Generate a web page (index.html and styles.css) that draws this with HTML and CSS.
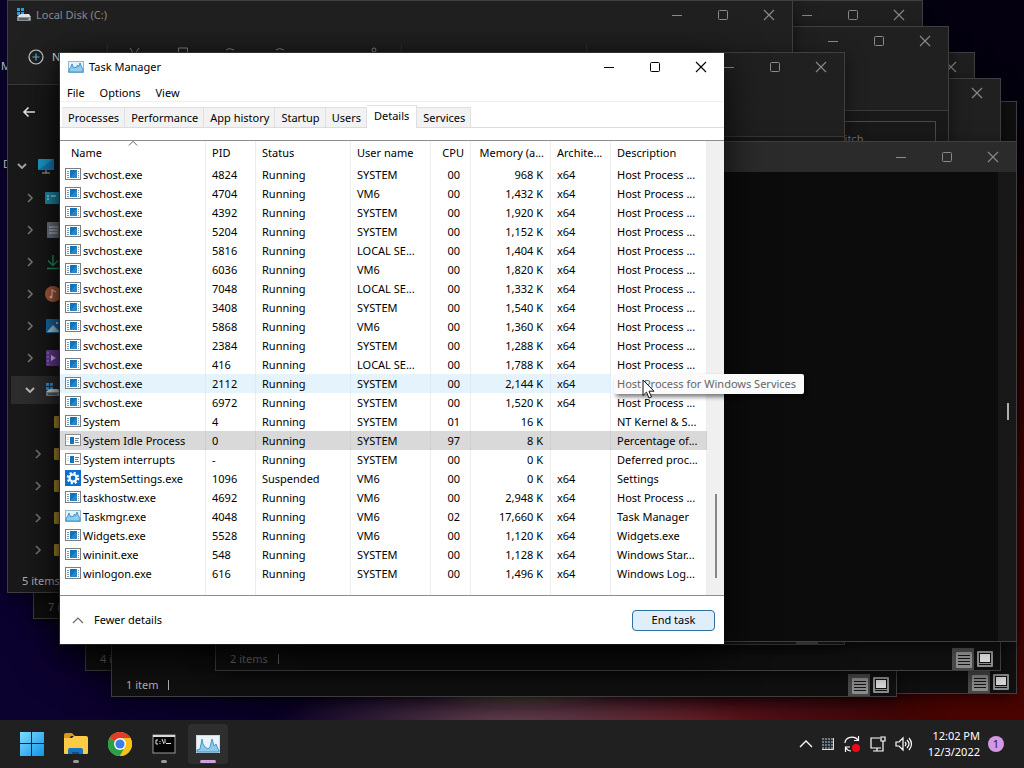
FILE: index.html
```html
<!DOCTYPE html>
<html lang="en">
<head>
  <meta charset="UTF-8" />
  <title>Task Manager</title>
  <link rel="stylesheet" href="styles.css">
</head>
<body>

  <!-- shared icons -->
  <svg class="sprite" aria-hidden="true">
    <symbol id="min" viewBox="0 0 12 12"><path d="M1 6.500h10" fill="none" stroke="currentColor"/></symbol>
    <symbol id="max" viewBox="0 0 12 12"><rect x="1.500" y="1.500" width="9" height="9" rx="1" fill="none" stroke="currentColor"/></symbol>
    <symbol id="close" viewBox="0 0 12 12"><path d="M1 1l10 10M11 1L1 11" fill="none" stroke="currentColor" stroke-width="1.100"/></symbol>
    <symbol id="chev" viewBox="0 0 12 12"><path d="M4 2l4 4-4 4" fill="none" stroke="currentColor" stroke-width="1.600"/></symbol>
    <symbol id="chev-down" viewBox="0 0 12 12"><path d="M2 4l4 4 4-4" fill="none" stroke="currentColor" stroke-width="1.800"/></symbol>
    <symbol id="chev-up" viewBox="0 0 12 12"><path d="M1 9l5-5 5 5" fill="none" stroke="currentColor" stroke-width="1.100"/></symbol>
    <symbol id="exe" viewBox="0 0 16 16">
      <rect x=".5" y="2.500" width="15" height="11" fill="#fff" stroke="#7b7f83"/>
      <rect x="5" y="4" width="7" height="8" fill="#1273b8"/><path d="M5 12l7-8v8z" fill="#2a86c8"/>
      <path d="M2 5.500h2M2 7.500h2M2 9.500h2M2 11.500h2M13 5.500h1M13 7.500h1M13 9.500h1M13 11.500h1" stroke="#7d95a8"/>
    </symbol>
    <symbol id="idle" viewBox="0 0 16 16">
      <rect x=".5" y="2.500" width="15" height="11" fill="#fff" stroke="#8b8f93"/>
      <rect x="5" y="5" width="4" height="7" fill="#1273b8"/>
      <path d="M10 6.500h4M10 8.500h3M10 10.500h4" stroke="#68809a"/>
      <path d="M2 5.500h2M2 7.500h2M2 9.500h2" stroke="#c7d2dc"/>
    </symbol>
    <symbol id="gear" viewBox="0 0 16 16">
      <rect width="16" height="16" fill="#0a6fce"/>
      <circle cx="8" cy="8" r="5.200" fill="none" stroke="#fff" stroke-width="2.200" stroke-dasharray="2.100 1.980"/>
      <circle cx="8" cy="8" r="3.500" fill="none" stroke="#fff" stroke-width="2.200"/>
    </symbol>
    <symbol id="graph" viewBox="0 0 16 16">
      <rect x=".5" y="2.500" width="15" height="11" fill="#e3f1f8" stroke="#9ab8c8"/>
      <path d="M1 10l1.500-1L4 5l1.500 4L7 8l1 1 1.500-3 1 2L12 4l1.500 4L15 10v3H1z" fill="#8fcdee" stroke="#2b86c4" stroke-width=".8"/>
    </symbol>
    <symbol id="disk" viewBox="0 0 16 14">
      <path d="M1 0h3v3H1zM5 0h3v3H5zM1 4h3v3H1zM5 4h3v3H5z" fill="#2f9be0"/>
      <path d="M5 6h8l2 3H1l2-2z" fill="#dfe3e6"/><rect x="1" y="9" width="14" height="4" rx="1" fill="#8b9095"/>
      <path d="M3 11h9" stroke="#2c3236"/><path d="M13 11h1" stroke="#7bf0a0"/>
    </symbol>
    <symbol id="folder" viewBox="0 0 16 14"><path d="M0 2q0-1 1-1h4l2 2h8q1 0 1 1v8q0 1-1 1H1q-1 0-1-1z" fill="#b99a3a"/></symbol>
    <symbol id="view-details" viewBox="0 0 22 22">
      <rect width="22" height="22" fill="#4a4a4a"/><rect x="4" y="4" width="16" height="16" rx="1" fill="#8d8d8d"/>
      <path d="M6 7.500h12M6 10.500h12M6 13.500h12M6 16.500h12" stroke="#151515"/>
    </symbol>
    <symbol id="view-icons" viewBox="0 0 16 16">
      <rect width="16" height="16" rx="1" fill="#8d8d8d"/><rect x="2.500" y="2.500" width="11" height="9" fill="#dcdcdc" stroke="#111"/>
      <path d="M2 13.500h12" stroke="#111"/>
    </symbol>
  </svg>

  <main class="desktop">
    <span class="shortcut shortcut-1">M</span>
    <span class="shortcut shortcut-2">D</span>

    <section class="window explorer w-far">
      <footer class="status"><span class="views"><svg width="22" height="22"><use href="#view-details"/></svg><svg width="16" height="16"><use href="#view-icons"/></svg></span></footer>
    </section>

    <section class="window explorer w-four">
      <footer class="status"><span>4 i</span></footer>
    </section>

    <section class="window explorer w-seven">
      <footer class="status"><span>7 i</span></footer>
    </section>

    <section class="window explorer w-one">
      <footer class="status lit"><span>1 item</span><i class="bar"></i><span class="views"><svg width="22" height="22"><use href="#view-details"/></svg><svg width="16" height="16"><use href="#view-icons"/></svg></span></footer>
    </section>

    <section class="window explorer w-c">
      <header class="titlebar"><span class="controls"><button aria-label="Close"><svg width="12" height="12"><use href="#close"/></svg></button></span></header>
    </section>

    <section class="window explorer w-a">
      <header class="titlebar"><span class="controls"><button aria-label="Minimize"><svg width="12" height="12"><use href="#min"/></svg></button><button aria-label="Maximize"><svg width="12" height="12"><use href="#max"/></svg></button><button aria-label="Close"><svg width="12" height="12"><use href="#close"/></svg></button></span></header>
    </section>

    <section class="window explorer w-two">
      <header class="titlebar"><span class="controls"><button aria-label="Close"><svg width="12" height="12"><use href="#close"/></svg></button></span></header>
      <div class="commands plain"></div>
      <footer class="status"><span>2 items</span><i class="bar"></i><span class="views"><svg width="22" height="22"><use href="#view-details"/></svg><svg width="16" height="16"><use href="#view-icons"/></svg></span></footer>
    </section>

    <section class="window explorer w-b">
      <header class="titlebar"><span class="controls"><button aria-label="Minimize"><svg width="12" height="12"><use href="#min"/></svg></button><button aria-label="Maximize"><svg width="12" height="12"><use href="#max"/></svg></button><button aria-label="Close"><svg width="12" height="12"><use href="#close"/></svg></button></span></header>
      <div class="commands"></div>
      <div class="address"><input class="search" type="search" placeholder="Twitch" aria-label="Search Twitch"></div>
    </section>

    <section class="window explorer w-disk">
      <header class="titlebar">
        <svg width="16" height="14"><use href="#disk"/></svg>
        <h2>Local Disk (C:)</h2>
        <span class="controls"><button aria-label="Minimize"><svg width="12" height="12"><use href="#min"/></svg></button><button aria-label="Maximize"><svg width="12" height="12"><use href="#max"/></svg></button><button aria-label="Close"><svg width="12" height="12"><use href="#close"/></svg></button></span>
      </header>
      <div class="commands">
        <button class="new">
          <svg width="16" height="16" viewBox="0 0 16 16"><circle cx="8" cy="8" r="7" fill="none" stroke="#c8d0d6" stroke-width="1.200"/><path d="M8 4.500v7M4.500 8h7" stroke="#58a9dc" stroke-width="1.200"/></svg>
          New
        </button>
        <svg class="tools" width="480" height="20" viewBox="0 0 480 20" fill="none" stroke="#8d8d8d">
          <path d="M.5 0v20M294.500 0v20M479.500 0v20" stroke="#343434"/>
          <path d="M23 3l8 12M32 3l-8 12M71.500 14v-11h9v11M119 5q3-3 8 0M169 5q3-3 8 0"/><circle cx="267" cy="5" r="2"/>
        </svg>
      </div>
      <div class="address">
        <button class="back" aria-label="Back"><svg width="14" height="12" viewBox="0 0 14 12"><path d="M13 6H2M6.500 1.500L2 6l4.500 4.500" fill="none" stroke="#e8e8e8" stroke-width="1.600"/></svg></button>
      </div>
      <ul class="tree">
        <li><svg width="12" height="12"><use href="#chev-down"/></svg><svg width="16" height="16" viewBox="0 0 16 16"><rect y="1" width="16" height="11" rx="1" fill="#1c9fd0"/><path d="M0 12L16 1v10q0 1-1 1z" fill="#1581bd"/><path d="M8 12v3M4 15h8" stroke="#b8c4ca"/></svg></li>
        <li class="sub"><svg width="12" height="12"><use href="#chev"/></svg><svg width="16" height="16" viewBox="0 0 16 16"><rect y="2" width="16" height="12" rx="1" fill="#1f94b5"/><path d="M2 6h2M2 9h2M6 6h5" stroke="#a8f0ff" stroke-width="1.500"/></svg></li>
        <li class="sub"><svg width="12" height="12"><use href="#chev"/></svg><svg width="16" height="16" viewBox="0 0 16 16"><rect x="2" width="13" height="16" rx="1" fill="#707b88"/><path d="M4 5h9M4 8h9M4 11h9" stroke="#dbe1e8"/></svg></li>
        <li class="sub"><svg width="12" height="12"><use href="#chev"/></svg><svg width="16" height="16" viewBox="0 0 16 16"><path d="M8 1v10M3 6.500l5 5 5-5M2 14.500h12" fill="none" stroke="#1f9a68" stroke-width="1.500"/></svg></li>
        <li class="sub"><svg width="12" height="12"><use href="#chev"/></svg><svg width="16" height="16" viewBox="0 0 16 16"><circle cx="8" cy="8" r="8" fill="#b5603f"/><path d="M7 11V4l4 2" fill="none" stroke="#f3d3c8" stroke-width="1.200"/><circle cx="6" cy="11" r="1.500" fill="#f3d3c8"/></svg></li>
        <li class="sub"><svg width="12" height="12"><use href="#chev"/></svg><svg width="16" height="16" viewBox="0 0 16 16"><rect x="1" y="1" width="15" height="14" rx="1" fill="#1b6fae"/><path d="M2 14l6-7 7 7z" fill="#b7dcf2"/><circle cx="12" cy="5" r="1" fill="#fff"/></svg></li>
        <li class="sub"><svg width="12" height="12"><use href="#chev"/></svg><svg width="16" height="16" viewBox="0 0 16 16"><rect x="1" width="15" height="16" rx="1" fill="#6d3fa3"/><path d="M6 5l5 3-5 3z" fill="#e2d3f5"/><path d="M3 2v13" stroke="#b596dd" stroke-dasharray="2 2"/></svg></li>
        <li class="sub current"><svg width="12" height="12"><use href="#chev-down"/></svg><svg width="16" height="14"><use href="#disk"/></svg></li>
        <li class="leaf"><svg width="12" height="12"></svg><svg width="16" height="14"><use href="#folder"/></svg></li>
        <li class="leaf"><svg width="12" height="12"><use href="#chev"/></svg><svg width="16" height="14"><use href="#folder"/></svg></li>
        <li class="leaf"><svg width="12" height="12"><use href="#chev"/></svg><svg width="16" height="14"><use href="#folder"/></svg></li>
        <li class="leaf"><svg width="12" height="12"><use href="#chev"/></svg><svg width="16" height="14"><use href="#folder"/></svg></li>
        <li class="leaf"><svg width="12" height="12"><use href="#chev"/></svg><svg width="16" height="14"><use href="#folder"/></svg></li>
      </ul>
      <footer class="status lit"><span>5 items</span></footer>
    </section>

    <section class="window explorer w-mid">
      <header class="titlebar"><span class="controls"><button aria-label="Minimize"><svg width="12" height="12"><use href="#min"/></svg></button><button aria-label="Maximize"><svg width="12" height="12"><use href="#max"/></svg></button><button aria-label="Close"><svg width="12" height="12"><use href="#close"/></svg></button></span></header>
      <div class="commands"></div>
      <footer class="status"><span class="views"><svg width="22" height="22"><use href="#view-details"/></svg><svg width="16" height="16"><use href="#view-icons"/></svg></span></footer>
    </section>

    <section class="window terminal">
      <header class="titlebar"><span class="controls"><button aria-label="Minimize"><svg width="12" height="12"><use href="#min"/></svg></button><button aria-label="Maximize"><svg width="12" height="12"><use href="#max"/></svg></button><button aria-label="Close"><svg width="12" height="12"><use href="#close"/></svg></button></span></header>
      <div class="console"><div class="console-scroll"><i></i></div></div>
    </section>

    <section class="window taskmgr">
      <header class="titlebar">
        <svg width="16" height="16"><use href="#graph"/></svg>
        <h1>Task Manager</h1>
        <span class="controls"><button aria-label="Minimize"><svg width="12" height="12"><use href="#min"/></svg></button><button aria-label="Maximize"><svg width="12" height="12"><use href="#max"/></svg></button><button aria-label="Close"><svg width="12" height="12"><use href="#close"/></svg></button></span>
      </header>
      <nav class="menu"><button>File</button><button>Options</button><button>View</button></nav>
      <div class="tabs" role="tablist">
        <button role="tab">Processes</button>
        <button role="tab">Performance</button>
        <button role="tab">App history</button>
        <button role="tab">Startup</button>
        <button role="tab">Users</button>
        <button role="tab" class="active" aria-selected="true">Details</button>
        <button role="tab">Services</button>
      </div>

      <div class="list">
        <table>
          <colgroup><col class="c-name"><col class="c-pid"><col class="c-status"><col class="c-user"><col class="c-cpu"><col class="c-mem"><col class="c-arch"><col></colgroup>
          <thead>
            <tr><th>Name<svg class="sort" width="10" height="10"><use href="#chev-up"/></svg></th><th>PID</th><th>Status</th><th>User name</th><th class="num">CPU</th><th class="num">Memory (a...</th><th>Archite...</th><th>Description</th></tr>
          </thead>
          <tbody>
            <tr><td><svg width="16" height="16"><use href="#exe"/></svg>svchost.exe</td><td>4824</td><td>Running</td><td>SYSTEM</td><td class="cpu">00</td><td class="num">968 K</td><td>x64</td><td>Host Process ...</td></tr>
            <tr><td><svg width="16" height="16"><use href="#exe"/></svg>svchost.exe</td><td>4704</td><td>Running</td><td>VM6</td><td class="cpu">00</td><td class="num">1,432 K</td><td>x64</td><td>Host Process ...</td></tr>
            <tr><td><svg width="16" height="16"><use href="#exe"/></svg>svchost.exe</td><td>4392</td><td>Running</td><td>SYSTEM</td><td class="cpu">00</td><td class="num">1,920 K</td><td>x64</td><td>Host Process ...</td></tr>
            <tr><td><svg width="16" height="16"><use href="#exe"/></svg>svchost.exe</td><td>5204</td><td>Running</td><td>SYSTEM</td><td class="cpu">00</td><td class="num">1,152 K</td><td>x64</td><td>Host Process ...</td></tr>
            <tr><td><svg width="16" height="16"><use href="#exe"/></svg>svchost.exe</td><td>5816</td><td>Running</td><td>LOCAL SE...</td><td class="cpu">00</td><td class="num">1,404 K</td><td>x64</td><td>Host Process ...</td></tr>
            <tr><td><svg width="16" height="16"><use href="#exe"/></svg>svchost.exe</td><td>6036</td><td>Running</td><td>VM6</td><td class="cpu">00</td><td class="num">1,820 K</td><td>x64</td><td>Host Process ...</td></tr>
            <tr><td><svg width="16" height="16"><use href="#exe"/></svg>svchost.exe</td><td>7048</td><td>Running</td><td>LOCAL SE...</td><td class="cpu">00</td><td class="num">1,332 K</td><td>x64</td><td>Host Process ...</td></tr>
            <tr><td><svg width="16" height="16"><use href="#exe"/></svg>svchost.exe</td><td>3408</td><td>Running</td><td>SYSTEM</td><td class="cpu">00</td><td class="num">1,540 K</td><td>x64</td><td>Host Process ...</td></tr>
            <tr><td><svg width="16" height="16"><use href="#exe"/></svg>svchost.exe</td><td>5868</td><td>Running</td><td>VM6</td><td class="cpu">00</td><td class="num">1,360 K</td><td>x64</td><td>Host Process ...</td></tr>
            <tr><td><svg width="16" height="16"><use href="#exe"/></svg>svchost.exe</td><td>2384</td><td>Running</td><td>SYSTEM</td><td class="cpu">00</td><td class="num">1,288 K</td><td>x64</td><td>Host Process ...</td></tr>
            <tr><td><svg width="16" height="16"><use href="#exe"/></svg>svchost.exe</td><td>416</td><td>Running</td><td>LOCAL SE...</td><td class="cpu">00</td><td class="num">1,788 K</td><td>x64</td><td>Host Process ...</td></tr>
            <tr class="hover"><td><svg width="16" height="16"><use href="#exe"/></svg>svchost.exe</td><td>2112</td><td>Running</td><td>SYSTEM</td><td class="cpu">00</td><td class="num">2,144 K</td><td>x64</td><td></td></tr>
            <tr><td><svg width="16" height="16"><use href="#exe"/></svg>svchost.exe</td><td>6972</td><td>Running</td><td>SYSTEM</td><td class="cpu">00</td><td class="num">1,520 K</td><td>x64</td><td>Host Process ...</td></tr>
            <tr><td><svg width="16" height="16"><use href="#exe"/></svg>System</td><td>4</td><td>Running</td><td>SYSTEM</td><td class="cpu">01</td><td class="num">16 K</td><td></td><td>NT Kernel &amp; S...</td></tr>
            <tr class="selected"><td><svg width="16" height="16"><use href="#idle"/></svg>System Idle Process</td><td>0</td><td>Running</td><td>SYSTEM</td><td class="cpu">97</td><td class="num">8 K</td><td></td><td>Percentage of...</td></tr>
            <tr><td><svg width="16" height="16"><use href="#idle"/></svg>System interrupts</td><td>-</td><td>Running</td><td>SYSTEM</td><td class="cpu">00</td><td class="num">0 K</td><td></td><td>Deferred proc...</td></tr>
            <tr><td><svg width="16" height="16"><use href="#gear"/></svg>SystemSettings.exe</td><td>1096</td><td>Suspended</td><td>VM6</td><td class="cpu">00</td><td class="num">0 K</td><td>x64</td><td>Settings</td></tr>
            <tr><td><svg width="16" height="16"><use href="#exe"/></svg>taskhostw.exe</td><td>4692</td><td>Running</td><td>VM6</td><td class="cpu">00</td><td class="num">2,948 K</td><td>x64</td><td>Host Process ...</td></tr>
            <tr><td><svg width="16" height="16"><use href="#graph"/></svg>Taskmgr.exe</td><td>4048</td><td>Running</td><td>VM6</td><td class="cpu">02</td><td class="num">17,660 K</td><td>x64</td><td>Task Manager</td></tr>
            <tr><td><svg width="16" height="16"><use href="#exe"/></svg>Widgets.exe</td><td>5528</td><td>Running</td><td>VM6</td><td class="cpu">00</td><td class="num">1,120 K</td><td>x64</td><td>Widgets.exe</td></tr>
            <tr><td><svg width="16" height="16"><use href="#exe"/></svg>wininit.exe</td><td>548</td><td>Running</td><td>SYSTEM</td><td class="cpu">00</td><td class="num">1,128 K</td><td>x64</td><td>Windows Star...</td></tr>
            <tr><td><svg width="16" height="16"><use href="#exe"/></svg>winlogon.exe</td><td>616</td><td>Running</td><td>SYSTEM</td><td class="cpu">00</td><td class="num">1,496 K</td><td>x64</td><td>Windows Log...</td></tr>
            <tr class="filler"><td></td><td></td><td></td><td></td><td></td><td></td><td></td><td></td></tr>
          </tbody>
        </table>
        <div class="scroll"><i></i></div>
      </div>

      <footer class="actions">
        <button class="fewer"><svg width="12" height="12"><use href="#chev-up"/></svg>Fewer details</button>
        <button class="end">End task</button>
      </footer>
    </section>

    <div class="tooltip" role="tooltip">Host Process for Windows Services</div>
    <svg class="cursor" width="13" height="20" viewBox="0 0 13 20"><path d="M1 1v15.500l3.500-3.400 2.500 5.900 2.500-1-2.500-5.800H12z" fill="#fff" stroke="#111"/></svg>
  </main>

  <footer class="taskbar">
    <nav class="apps">
      <button aria-label="Start"><svg width="24" height="24" viewBox="0 0 24 24"><defs><linearGradient id="win" x2="1" y2="1"><stop stop-color="#7fdcff"/><stop offset="1" stop-color="#1094e4"/></linearGradient></defs><path d="M0 0h11v11H0zM12 0h12v11H12zM0 12h11v12H0zM12 12h12v12H12z" fill="url(#win)"/></svg></button>
      <button class="running" aria-label="File Explorer"><svg width="26" height="24" viewBox="0 0 26 24"><path d="M1 3q0-2 2-2h6l3 3h-4l-2 3H1z" fill="#d9971c"/><path d="M1 6h8l2-2h12q2 0 2 2v15q0 1-1 1H2q-1 0-1-1z" fill="#fbcb45"/><path d="M5 22v-4q0-2 2-2h11q2 0 2 2v4z" fill="#1673bd"/><path d="M9 22v-2h7v2z" fill="#0d4f8c"/></svg></button>
      <button aria-label="Chrome"><svg width="24" height="24" viewBox="0 0 24 24"><circle cx="12" cy="12" r="12" fill="#fbc116"/><path d="M12 12L1.600 6A12 12 0 0 1 22.400 6z" fill="#e23b2e"/><path d="M12 12L1.600 6A12 12 0 0 0 12 24l5-9z" fill="#2c9f4b"/><path d="M12 6h10.400A12 12 0 0 1 12 24l5-9z" fill="#fbc116"/><circle cx="12" cy="12" r="6" fill="#fff"/><circle cx="12" cy="12" r="4.600" fill="#3a7ee8"/></svg></button>
      <button class="running" aria-label="Command Prompt"><svg width="24" height="20" viewBox="0 0 24 20"><rect x="1" y="1" width="22" height="18" fill="#050505" stroke="#9a9a9a"/><path d="M1 2h22" stroke="#d8d8d8" stroke-width="2"/><path d="M6 6H4v4h2M8 7v1M8 9v1M10 5l2 5M13 5v4M14 9.500h5" fill="none" stroke="#e6e6e6"/></svg></button>
      <button class="running active" aria-label="Task Manager"><svg width="24" height="18" viewBox="0 0 24 18"><rect width="24" height="18" fill="#cfd8de"/><rect x="1" y="1" width="22" height="16" fill="#e9f3f8"/><path d="M1 15l3-1 2-10 1 5 2 3 3 2 2-2 2-8 2 7 2-2 2 5 1 1v2H1z" fill="#8cc9ea" stroke="#2b86c4" stroke-width=".800"/></svg></button>
    </nav>
    <div class="tray">
      <svg width="14" height="12" viewBox="0 0 14 12"><path d="M1 9l6-6 6 6" fill="none" stroke="#fff" stroke-width="1.300"/></svg>
      <svg width="14" height="14" viewBox="0 0 14 14"><path d="M1 1h12v12H1z" fill="#6e7880"/><path d="M1 3.500h11M1 6.500h11M1 9.500h11M3.500 1v11M6.500 1v11M9.500 1v11" stroke="#23282c"/><path d="M12.500 1v11.500H1" fill="none" stroke="#e0e0e0"/></svg>
      <svg width="18" height="18" viewBox="0 0 18 18" fill="none" stroke="#fff" stroke-width="1.200"><path d="M2 8A7 6 0 0 1 15 5M15.500 1v4.500H11M7 12H2.500v5M3 13q2 3 5 3"/><circle cx="13" cy="13" r="4" fill="#f00818" stroke="none"/></svg>
      <svg width="18" height="18" viewBox="0 0 18 18" fill="none" stroke="#fff" stroke-width="1.200"><path d="M11 3H2v10h10M8 13v3M4 16h8"/><path d="M12 2h4v4h-4zM14 6v10h-2"/></svg>
      <svg width="18" height="16" viewBox="0 0 18 16" fill="none" stroke="#fff" stroke-width="1.200"><path d="M1 6h3l4-4v12l-4-4H1zM10 6q2 2 0 4M12 4q4 4 0 8M14 2q5 6 0 12"/></svg>
      <div class="clock"><time>12:02 PM</time><time>12/3/2022</time></div>
      <span class="badge">1</span>
    </div>
  </footer>

</body>
</html>
```
FILE: styles.css
```css
* {
  box-sizing: border-box;
}
body {
  margin: 0;
  min-height: 100vh;
  display: flex;
  flex-direction: column;
  font-family: "Noto Sans", "Open Sans", sans-serif;
  font-size: 11px;
  line-height: 18px;
  color: #000;
}
button {
  font: inherit;
  color: inherit;
  background: none;
  border: 0;
  padding: 0;
}
svg {
  display: block;
  flex: none;
}
.sprite {
  position: absolute;
  width: 0;
  height: 0;
}
h1, h2 {
  margin: 0;
  font-size: 11px;
  font-weight: normal;
}

.desktop {
  flex: 1;
  position: relative;
  overflow: hidden;
  background:
    radial-gradient(ellipse 100px 14px at 520px 694px, #5a5240, transparent),
    radial-gradient(ellipse 240px 70px at 510px 730px, #644350, transparent),
    radial-gradient(ellipse 260px 70px at 680px 730px, #6e181a, transparent),
    radial-gradient(ellipse 420px 560px at 1080px 660px, #4a0400 30%, transparent),
    linear-gradient(90deg, #0c0230, #0a0022 40%, #04000e);
}
.shortcut {
  position: absolute;
  color: #ddd;
}
.shortcut-1 {
  left: 1px;
  top: 57px;
}
.shortcut-2 {
  left: 3px;
  top: 155px;
}

/* windows */
.window {
  position: absolute;
  display: flex;
  flex-direction: column;
  border: 1px solid #3f3f3f;
  background: #191919;
  color: #8a8a8a;
  box-shadow: 0 4px 16px rgba(0, 0, 0, 0.5);
}
.explorer {
  width: 786px;
  height: 593px;
}
.titlebar {
  height: 29px;
  display: flex;
  align-items: center;
  gap: 4px;
  padding: 0 0 1px 8px;
  background: #202020;
}
.controls {
  margin-left: auto;
  display: flex;
  height: 100%;
}
.controls button {
  width: 46px;
  display: grid;
  place-items: center;
}
.commands {
  height: 55px;
  display: flex;
  align-items: center;
  padding-left: 20px;
  background: #202020;
  border-bottom: 1px solid #3a3a3a;
}
.commands.plain {
  height: 80px;
  border: 0;
}
.new {
  width: 79px;
  display: flex;
  align-items: center;
  gap: 8px;
  color: #e0e0e0;
}
.tools {
  align-self: flex-start;
  margin-top: 15px;
}
.address {
  height: 54px;
  display: flex;
  align-items: center;
  padding: 0 12px;
}
.back {
  padding: 0 2px;
}
.search {
  width: 121px;
  height: 34px;
  margin-left: auto;
  padding: 0 14px;
  font: inherit;
  color: #777;
  background: #191919;
  border: 1px solid #4a4a4a;
}
.search::placeholder {
  color: #777;
}
.status {
  height: 22px;
  margin-top: auto;
  display: flex;
  align-items: center;
  gap: 10px;
  padding: 0 7px 0 14px;
  color: #6f6f6f;
}
.status.lit {
  color: #b4b4b4;
}
.bar {
  width: 1px;
  height: 10px;
  background: currentColor;
}
.views {
  margin-left: auto;
  display: flex;
  align-items: center;
  gap: 3px;
}

.w-far { left: 231px; top: 101px; }
.w-four { left: 85px; top: 78px; }
.w-seven { left: 33px; top: 26px; }
.w-one { left: 111px; top: 104px; }
.w-c { left: 189px; top: 52px; }
.w-a { left: 137px; top: 0; }
.w-two { left: 215px; top: 78px; }
.w-b { left: 163px; top: 26px; }
.w-disk { left: 7px; top: 0; }
.w-mid { left: 59px; top: 52px; }
.w-one, .w-two, .w-four, .w-seven, .w-far {
  background: #101010;
}

.tree {
  list-style: none;
  margin: 0;
  padding: 11px 0 0 3px;
}
.tree li {
  height: 32px;
  display: flex;
  align-items: center;
  gap: 10px;
  padding-left: 5px;
  color: #a8a8a8;
}
.tree .sub {
  padding-left: 13px;
  gap: 9px;
  color: #777;
}
.tree .leaf {
  padding-left: 21px;
  color: #777;
}
.tree .current {
  height: 28px;
  margin: 2px 0;
  background: #2d2d2d;
  color: #c0c0c0;
}

/* terminal */
.terminal {
  left: 300px;
  top: 141px;
  width: 717px;
  height: 501px;
  background: #0c0c0c;
}
.terminal .titlebar {
  height: 30px;
  background: #2b2b2b;
}
.console {
  flex: 1;
  display: flex;
  justify-content: flex-end;
}
.console-scroll {
  width: 18px;
  padding: 231px 7px 0 9px;
  background: #181818;
}
.console-scroll i {
  display: block;
  width: 2px;
  height: 17px;
  background: #b0b0b0;
}

/* task manager */
.taskmgr {
  left: 60px;
  top: 53px;
  width: 664px;
  height: 591px;
  border: 0;
  background: #fff;
  color: #000;
  box-shadow: 0 12px 40px rgba(0, 0, 0, 0.8);
}
.taskmgr .titlebar {
  background: #fff;
  gap: 5px;
}
.menu {
  display: flex;
  gap: 15px;
  height: 20px;
  padding: 2px 0 0 7px;
  border-bottom: 1px solid #f0f0f0;
}
.menu button {
  height: 18px;
}
.tabs {
  display: flex;
  align-items: flex-end;
  height: 26px;
  margin-bottom: 12px;
  padding-left: 2px;
  border-bottom: 1px solid #dcdcdc;
}
.tabs button {
  height: 20px;
  padding: 0 5px 0 6px;
  background: #f2f2f2;
  border: 1px solid #e0e0e0;
  border-width: 1px 1px 0 0;
}
.tabs .active {
  height: 23px;
  padding: 0 7px 3px;
  margin-bottom: -1px;
  background: #fff;
}
.list {
  flex: 1;
  display: flex;
  border: 1px solid #8d8d8d;
  border-width: 1px 0;
}
table {
  flex: 1;
  width: 0;
  table-layout: fixed;
  border-collapse: separate;
  border-spacing: 0;
}
th, td {
  height: 19px;
  padding: 0 6px;
  overflow: hidden;
  white-space: nowrap;
  text-align: left;
  font-weight: normal;
  line-height: 19px;
  border-right: 1px solid #ededed;
}
th {
  height: 24px;
  padding-bottom: 2px;
  position: relative;
}
th:first-child {
  padding-left: 11px;
}
td:first-child {
  padding: 0 0 0 5px;
}
td svg {
  display: inline-block;
  vertical-align: top;
  margin: 1px 2px 0 0;
}
.num, .cpu {
  text-align: right;
}
td.num {
  padding-right: 7px;
}
.cpu {
  padding-right: 10px;
}
.sort {
  position: absolute;
  left: 68px;
  top: -3px;
  color: #555;
}
.c-name { width: 146px; }
.c-pid { width: 50px; }
.c-status { width: 95px; }
.c-user { width: 80px; }
.c-cpu { width: 40px; }
.c-mem { width: 80px; }
.c-arch { width: 60px; }
.hover td {
  background: #e5f3fd;
  border-color: #d9ebf8;
}
.hover td:last-child {
  background: #fff;
}
.selected td {
  background: #d9d9d9;
  border-color: #cecece;
}
.filler td {
  height: 12px;
}
.scroll {
  width: 17px;
  padding: 353px 7px 0 8px;
  background: #f0f0f0;
}
.scroll i {
  display: block;
  width: 2px;
  height: 84px;
  background: #868686;
}
.actions {
  height: 48px;
  display: flex;
  align-items: center;
  justify-content: space-between;
  padding: 0 9px 0 12px;
}
.fewer {
  display: flex;
  align-items: center;
  gap: 10px;
}
.fewer svg {
  color: #666;
}
.end {
  width: 83px;
  height: 21px;
  background: #e0eef9;
  border: 1px solid #2f6f9f;
  border-radius: 4px;
}

.tooltip {
  position: absolute;
  left: 614px;
  top: 374px;
  padding: 1px 8px 1px 3px;
  background: #fafafa;
  color: #666;
  border-radius: 2px;
  box-shadow: 2px 3px 4px rgba(0, 0, 0, 0.5);
}
.cursor {
  position: absolute;
  left: 642px;
  top: 379px;
}

/* taskbar */
.taskbar {
  height: 48px;
  display: flex;
  justify-content: space-between;
  align-items: center;
  padding: 0 20px 0 12px;
  background: #202020;
  color: #fff;
}
.apps {
  display: flex;
  gap: 4px;
}
.apps button {
  position: relative;
  width: 40px;
  height: 40px;
  display: grid;
  place-items: center;
  border-radius: 4px;
}
.apps .active {
  background: #2e2e2e;
}
.running::after {
  content: "";
  position: absolute;
  bottom: 1px;
  left: 17px;
  width: 6px;
  height: 3px;
  border-radius: 2px;
  background: #9a9a9a;
}
.active.running::after {
  left: 12px;
  width: 16px;
  background: #cfa0dc;
}
.tray {
  display: flex;
  align-items: center;
  gap: 8px;
}
.clock {
  margin-left: 7px;
  display: flex;
  flex-direction: column;
  text-align: right;
  line-height: 16px;
}
.badge {
  width: 16px;
  height: 16px;
  border-radius: 8px;
  background: #d596e4;
  color: #222;
  line-height: 16px;
  text-align: center;
}
```
